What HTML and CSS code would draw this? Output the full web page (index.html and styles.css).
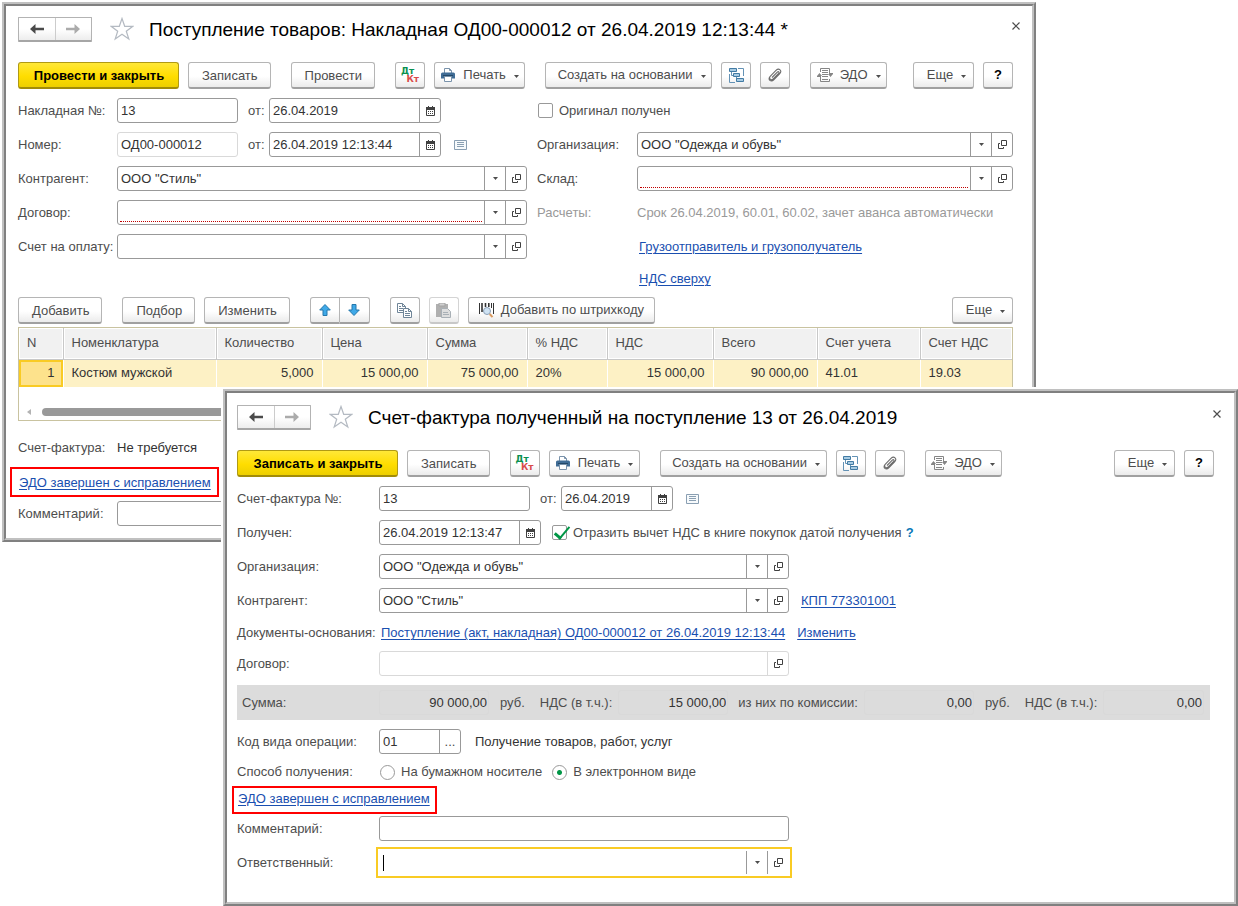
FILE: index.html
```html
<!DOCTYPE html>
<html lang="ru">
<head>
<meta charset="utf-8">
<title>Поступление товаров</title>
<link rel="stylesheet" href="styles.css">
</head>
<body>
<svg class="sprite" aria-hidden="true">
  <symbol id="i-back" viewBox="0 0 14 12"><path d="M0 6 5.500 1v3.700H14v2.600H5.500V11z" fill="currentColor"/></symbol>
  <symbol id="i-fwd" viewBox="0 0 14 12"><path d="M14 6 8.500 1v3.700H0v2.600h8.500V11z" fill="currentColor"/></symbol>
  <symbol id="i-star" viewBox="0 0 24 24"><path d="M12 1.500 14.700 9.300H22.800L16.300 14.200 18.800 22 12 17.200 5.200 22 7.700 14.200 1.200 9.300H9.300z" fill="none" stroke="#b4bac2" stroke-width="1.200"/></symbol>
  <symbol id="i-close" viewBox="0 0 10 10"><path d="M1.500 1.500l7 7M8.500 1.500l-7 7" stroke="#4d4d4d" stroke-width="1.200" fill="none"/></symbol>
  <symbol id="i-print" viewBox="0 0 14 14"><path d="M3.500 5V.5h5l2 2V5" fill="#fff" stroke="#7a93ab"/><path d="M8.500.5v2h2" fill="none" stroke="#7a93ab"/><path d="M1.500 4.500h11a1.500 1.500 0 0 1 1.500 1.500v4.500H0V6a1.500 1.500 0 0 1 1.500-1.500z" fill="#3f6c95"/><path d="M2 7.500h10" stroke="#234867"/><path d="M3.500 8.500h7v5h-7z" fill="#fff" stroke="#7a93ab"/></symbol>
  <symbol id="i-tree" viewBox="0 0 15 15"><path d="M9 .5h5.500V8M.5 6v8.500H6M2.500 3.500v4h2M7.500 8.500v4h1" fill="none" stroke="#6492b5"/><path d="M.5.5h7v3h-7zM4.500 5.500h6v3h-6zM7.500 10.500h7v3h-7z" fill="#a8cbe2" stroke="#427ba4"/></symbol>
  <symbol id="i-clip" viewBox="0 0 14 14"><path d="M4 9.500 9.300 4.200c1.200-1.200 2.400 0 1.300 1.200L5.200 10.800C3 13 .2 10.300 2.400 8.100L8 2.400c3-3 6.500.4 3.600 3.500L6 11.600c-3 3-6.700 0-4-3" fill="none" stroke="#6c6c6c" stroke-width="1.100"/></symbol>
  <symbol id="i-edo" viewBox="0 0 16 14"><path d="M3.500 4V.5h9V5M3.500 9v4.500h9V11" fill="none" stroke="#858585"/><path d="M5 2.500h6M5 4.500h6M5 6.500h6M5 8.500h6M5 11.500h6M0 8.500h4M12 5.500h4" stroke="#858585"/><path d="M0 8h5L2.500 5zM11 6h5l-2.500 3z" fill="#858585"/></symbol>
  <symbol id="i-caret" viewBox="0 0 5 3"><path d="M0 0h5L2.500 3z" fill="#4d4d4d"/></symbol>
  <symbol id="i-cal" viewBox="0 0 9 10"><path d="M2.500 0v2M6.500 0v2" stroke="#404040"/><path d="M0 1h9v3H0z" fill="#404040"/><path d="M.5 3.500v6h8v-6" fill="none" stroke="#404040"/><path d="M2 5.500h1M4 5.500h1M6 5.500h1M2 7.500h1M4 7.500h1M6 7.500h1" stroke="#404040"/></symbol>
  <symbol id="i-open" viewBox="0 0 9 9"><path d="M3.500.5h5v5h-5z" fill="none" stroke="#404040"/><path d="M2 3.500H.5v5h5V7" fill="none" stroke="#404040"/></symbol>
  <symbol id="i-list" viewBox="0 0 13 10"><path d="M.5.5h12v9H.5z" fill="#f7fafc" stroke="#8a9fb2"/><path d="M3 2.500h7M3 4.500h7M3 6.500h7" stroke="#8a9fb2"/></symbol>
  <symbol id="i-up" viewBox="0 0 12 12"><path d="M6 .5 11.300 6H8v5.500H4V6H.7z" fill="#3fa9e8" stroke="#2577ab"/></symbol>
  <symbol id="i-down" viewBox="0 0 12 12"><path d="M6 11.500 11.300 6H8V.5H4V6H.7z" fill="#3fa9e8" stroke="#2577ab"/></symbol>
  <symbol id="i-copy" viewBox="0 0 15 15"><path d="M.5.5h5l3 3v6h-8z" fill="#fff" stroke="#6f8598"/><path d="M5.500.5v3h3M2 3.500h2M2 5.500h4M2 7.500h4" fill="none" stroke="#6f8598"/><path d="M6.500 5.500h5l3 3v6h-8z" fill="#fff" stroke="#6f8598"/><path d="M11.500 5.500v3h3M8 8.500h2M8 10.500h5M8 12.500h5" fill="none" stroke="#6f8598"/></symbol>
  <symbol id="i-paste" viewBox="0 0 15 15"><path d="M0 1h12v13H0z" fill="#b0b0b0"/><path d="M3 0h6v3H3z" fill="#d0d0d0" stroke="#a4a4a4"/><path d="M5.500 5.500h6l3 3v6h-9z" fill="#dedede" stroke="#a9b0b6"/><path d="M7 9.500h5M7 11.500h6" stroke="#a9b0b6"/></symbol>
  <symbol id="i-bar" viewBox="0 0 15 15"><path d="M.5 0v11M12.500 0v5M14.500 0v11" stroke="#333"/><path d="M3 0v9M6.500 0v4M9.800 0v4" stroke="#333" stroke-width="1.600"/><circle cx="8" cy="8" r="3.500" fill="#cfe3f4" stroke="#8b9fb5"/><path d="M10.700 11 13.500 14.200" stroke="#d99a60" stroke-width="2"/></symbol>
</svg>

<main class="desktop">
<section class="window window-receipt">
 <div class="window-body">
  <header class="titlebar">
    <div class="nav"><button aria-label="Назад"><svg class="ic-nav"><use href="#i-back"/></svg></button><button class="muted" aria-label="Вперед"><svg class="ic-nav"><use href="#i-fwd"/></svg></button></div>
    <svg class="star"><use href="#i-star"/></svg>
    <h1>Поступление товаров: Накладная ОД00-000012 от 26.04.2019 12:13:44 *</h1>
    <button class="close" aria-label="Закрыть"><svg class="ic-close"><use href="#i-close"/></svg></button>
  </header>
  <div class="toolbar">
    <button class="btn primary">Провести и закрыть</button>
    <button class="btn">Записать</button>
    <button class="btn apart">Провести</button>
    <button class="btn square apart dtkt"><span class="dt">Дт</span><span class="kt">Кт</span></button>
    <button class="btn print"><svg class="ic14"><use href="#i-print"/></svg>Печать<svg class="caret"><use href="#i-caret"/></svg></button>
    <button class="btn create apart">Создать на основании<svg class="caret"><use href="#i-caret"/></svg></button>
    <button class="btn square" aria-label="Структура"><svg class="ic15"><use href="#i-tree"/></svg></button>
    <button class="btn square" aria-label="Файлы"><svg class="ic14"><use href="#i-clip"/></svg></button>
    <button class="btn edo apart"><svg class="ic16"><use href="#i-edo"/></svg>ЭДО<svg class="caret"><use href="#i-caret"/></svg></button>
    <button class="btn more push">Еще<svg class="caret"><use href="#i-caret"/></svg></button>
    <button class="btn square help">?</button>
  </div>
  <div class="columns">
    <div class="rows">
      <div class="row"><label class="lbl" for="a1">Накладная №:</label><div class="field w-num"><input id="a1" value="13"></div><label class="ot" for="a2">от:</label><div class="field w-date"><input id="a2" value="26.04.2019"><button aria-label="Календарь"><svg class="ic-cal"><use href="#i-cal"/></svg></button></div></div>
      <div class="row"><label class="lbl" for="a3">Номер:</label><div class="field w-num light"><input id="a3" value="ОД00-000012"></div><label class="ot" for="a4">от:</label><div class="field w-date"><input id="a4" value="26.04.2019 12:13:44"><button aria-label="Календарь"><svg class="ic-cal"><use href="#i-cal"/></svg></button></div><svg class="ic-list"><use href="#i-list"/></svg></div>
      <div class="row"><label class="lbl" for="a5">Контрагент:</label><div class="field grow"><input id="a5" value='ООО "Стиль"'><button aria-label="Выбрать"><svg class="caret"><use href="#i-caret"/></svg></button><button aria-label="Открыть"><svg class="ic-open"><use href="#i-open"/></svg></button></div></div>
      <div class="row"><label class="lbl" for="a6">Договор:</label><div class="field grow required"><input id="a6"><button aria-label="Выбрать"><svg class="caret"><use href="#i-caret"/></svg></button><button aria-label="Открыть"><svg class="ic-open"><use href="#i-open"/></svg></button></div></div>
      <div class="row"><label class="lbl" for="a7">Счет на оплату:</label><div class="field grow"><input id="a7"><button aria-label="Выбрать"><svg class="caret"><use href="#i-caret"/></svg></button><button aria-label="Открыть"><svg class="ic-open"><use href="#i-open"/></svg></button></div></div>
    </div>
    <div class="rows">
      <div class="row"><label class="check"><input type="checkbox">Оригинал получен</label></div>
      <div class="row"><label class="lbl" for="a8">Организация:</label><div class="field grow"><input id="a8" value='ООО "Одежда и обувь"'><button aria-label="Выбрать"><svg class="caret"><use href="#i-caret"/></svg></button><button aria-label="Открыть"><svg class="ic-open"><use href="#i-open"/></svg></button></div></div>
      <div class="row"><label class="lbl" for="a9">Склад:</label><div class="field grow required"><input id="a9"><button aria-label="Выбрать"><svg class="caret"><use href="#i-caret"/></svg></button><button aria-label="Открыть"><svg class="ic-open"><use href="#i-open"/></svg></button></div></div>
      <div class="row dim"><span class="lbl">Расчеты:</span><span>Срок 26.04.2019, 60.01, 60.02, зачет аванса автоматически</span></div>
      <div class="row links"><a href="#">Грузоотправитель и грузополучатель</a><a href="#">НДС сверху</a></div>
    </div>
  </div>
  <div class="toolbar items-bar">
    <button class="btn">Добавить</button>
    <button class="btn apart">Подбор</button>
    <button class="btn">Изменить</button>
    <div class="pair apart"><button class="btn" aria-label="Вверх"><svg class="ic12"><use href="#i-up"/></svg></button><button class="btn" aria-label="Вниз"><svg class="ic12"><use href="#i-down"/></svg></button></div>
    <button class="btn square apart" aria-label="Копировать"><svg class="ic15"><use href="#i-copy"/></svg></button>
    <button class="btn square disabled" aria-label="Вставить"><svg class="ic15"><use href="#i-paste"/></svg></button>
    <button class="btn barcode"><svg class="ic15"><use href="#i-bar"/></svg>Добавить по штрихкоду</button>
    <button class="btn more push">Еще<svg class="caret"><use href="#i-caret"/></svg></button>
  </div>
  <div class="grid-box">
    <table class="items">
      <colgroup><col class="c45"><col class="c153"><col class="c106"><col class="c105"><col class="c100"><col class="c80"><col class="c106"><col class="c104"><col class="c103"><col></colgroup>
      <thead><tr><th>N</th><th>Номенклатура</th><th>Количество</th><th>Цена</th><th>Сумма</th><th>% НДС</th><th>НДС</th><th>Всего</th><th>Счет учета</th><th>Счет НДС</th></tr></thead>
      <tbody><tr><td class="num current">1</td><td>Костюм мужской</td><td class="num">5,000</td><td class="num">15 000,00</td><td class="num">75 000,00</td><td>20%</td><td class="num">15 000,00</td><td class="num">90 000,00</td><td>41.01</td><td>19.03</td></tr></tbody>
    </table>
    <div class="scroll"><span class="scroll-arrow"></span><span class="scroll-thumb"></span></div>
  </div>
  <div class="footer-rows">
    <div class="line"><span class="lbl">Счет-фактура:</span><span class="value">Не требуется</span></div>
    <div class="marked"><a href="#">ЭДО завершен с исправлением</a></div>
    <div class="row"><label class="lbl" for="a10">Комментарий:</label><div class="field grow"><input id="a10"></div></div>
  </div>
 </div>
</section>

<section class="window window-invoice">
 <div class="window-body">
  <header class="titlebar">
    <div class="nav"><button aria-label="Назад"><svg class="ic-nav"><use href="#i-back"/></svg></button><button class="muted" aria-label="Вперед"><svg class="ic-nav"><use href="#i-fwd"/></svg></button></div>
    <svg class="star"><use href="#i-star"/></svg>
    <h1>Счет-фактура полученный на поступление 13 от 26.04.2019</h1>
    <button class="close" aria-label="Закрыть"><svg class="ic-close"><use href="#i-close"/></svg></button>
  </header>
  <div class="toolbar">
    <button class="btn primary">Записать и закрыть</button>
    <button class="btn">Записать</button>
    <button class="btn square apart dtkt"><span class="dt">Дт</span><span class="kt">Кт</span></button>
    <button class="btn print"><svg class="ic14"><use href="#i-print"/></svg>Печать<svg class="caret"><use href="#i-caret"/></svg></button>
    <button class="btn create apart">Создать на основании<svg class="caret"><use href="#i-caret"/></svg></button>
    <button class="btn square" aria-label="Структура"><svg class="ic15"><use href="#i-tree"/></svg></button>
    <button class="btn square" aria-label="Файлы"><svg class="ic14"><use href="#i-clip"/></svg></button>
    <button class="btn edo apart"><svg class="ic16"><use href="#i-edo"/></svg>ЭДО<svg class="caret"><use href="#i-caret"/></svg></button>
    <button class="btn more push">Еще<svg class="caret"><use href="#i-caret"/></svg></button>
    <button class="btn square help">?</button>
  </div>
  <div class="rows">
    <div class="row"><label class="lbl" for="b1">Счет-фактура №:</label><div class="field w-inv"><input id="b1" value="13"></div><label class="ot" for="b2">от:</label><div class="field w-short"><input id="b2" value="26.04.2019"><button aria-label="Календарь"><svg class="ic-cal"><use href="#i-cal"/></svg></button></div><svg class="ic-list"><use href="#i-list"/></svg></div>
    <div class="row"><label class="lbl" for="b3">Получен:</label><div class="field w-stamp"><input id="b3" value="26.04.2019 12:13:47"><button aria-label="Календарь"><svg class="ic-cal"><use href="#i-cal"/></svg></button></div><label class="check inset"><input type="checkbox" checked>Отразить вычет НДС в книге покупок датой получения</label><button class="hint">?</button></div>
    <div class="row"><label class="lbl" for="b4">Организация:</label><div class="field w-main"><input id="b4" value='ООО "Одежда и обувь"'><button aria-label="Выбрать"><svg class="caret"><use href="#i-caret"/></svg></button><button aria-label="Открыть"><svg class="ic-open"><use href="#i-open"/></svg></button></div></div>
    <div class="row"><label class="lbl" for="b5">Контрагент:</label><div class="field w-main"><input id="b5" value='ООО "Стиль"'><button aria-label="Выбрать"><svg class="caret"><use href="#i-caret"/></svg></button><button aria-label="Открыть"><svg class="ic-open"><use href="#i-open"/></svg></button></div><a class="side" href="#">КПП 773301001</a></div>
  </div>
  <div class="line basis"><span class="lbl">Документы-основания:</span><a href="#">Поступление (акт, накладная) ОД00-000012 от 26.04.2019 12:13:44</a><a class="side" href="#">Изменить</a></div>
  <div class="row"><label class="lbl" for="b6">Договор:</label><div class="field w-main light"><input id="b6"><button aria-label="Открыть"><svg class="ic-open"><use href="#i-open"/></svg></button></div></div>
  <div class="totals">
    <label class="lbl" for="t1">Сумма:</label><input id="t1" value="90 000,00" readonly><span class="unit">руб.</span>
    <label for="t2">НДС (в т.ч.):</label><input id="t2" value="15 000,00" readonly>
    <label class="gap" for="t3">из них по комиссии:</label><input id="t3" value="0,00" readonly><span class="unit">руб.</span>
    <label for="t4">НДС (в т.ч.):</label><input id="t4" class="last" value="0,00" readonly>
  </div>
  <div class="row"><label class="lbl" for="b7">Код вида операции:</label><div class="field w-code"><input id="b7" value="01"><button>...</button></div><span class="value note">Получение товаров, работ, услуг</span></div>
  <div class="line way"><span class="lbl">Способ получения:</span><label class="radio"><input type="radio" name="way">На бумажном носителе</label><label class="radio"><input type="radio" name="way" checked>В электронном виде</label></div>
  <div class="marked"><a href="#">ЭДО завершен с исправлением</a></div>
  <div class="rows">
    <div class="row"><label class="lbl" for="b8">Комментарий:</label><div class="field w-main"><input id="b8"></div></div>
    <div class="row"><label class="lbl" for="b9">Ответственный:</label><div class="field w-main focused"><span class="cursor"></span><input id="b9"><button aria-label="Выбрать"><svg class="caret"><use href="#i-caret"/></svg></button><button aria-label="Открыть"><svg class="ic-open"><use href="#i-open"/></svg></button></div></div>
  </div>
 </div>
</section>
</main>
</body>
</html>
```

FILE: styles.css
```css
* { box-sizing: border-box; }

body {
  margin: 0;
  background: #fff;
  color: #4d4d4d;
  font: 13px/16px "Liberation Sans", Arial, sans-serif;
}

button, input { font: inherit; color: inherit; margin: 0; }
button { cursor: pointer; }
svg { display: block; flex: none; }
a { color: #1a4fb0; text-decoration: underline; text-underline-offset: 2px; text-decoration-thickness: 1px; white-space: nowrap; }

.sprite { position: absolute; width: 0; height: 0; }
.desktop { position: relative; min-height: 906px; overflow: hidden; }

/* Windows */
.window {
  position: absolute;
  background: #fff;
  border: 2px solid;
  border-color: #c0c0c0 #808080 #808080 #c0c0c0;
}
.window-body {
  border: 2px solid;
  border-color: #808080 #c0c0c0 #c0c0c0 #808080;
}
.window-receipt { left: 2px; right: 202px; top: 2px; }
.window-receipt .window-body { padding: 10px 19px 12px 12px; }
.window-invoice { left: 223px; right: 0; top: 389px; box-shadow: 0 0 0 2px #fff; }
.window-invoice .window-body { padding: 11px 20px 27px 10px; }

/* Title */
.titlebar { display: flex; align-items: center; height: 26px; margin-bottom: 20px; }
.nav { display: flex; width: 74px; height: 25px; border: 1px solid #b3b3b3; border-bottom: 2px solid #a6a6a6; border-radius: 1px; background: linear-gradient(#fff 50%, #ededed); }
.nav button { flex: 1; display: flex; align-items: center; justify-content: center; padding: 0; border: 0; background: none; color: #4a4a4a; }
.nav .muted { color: #ababab; border-left: 1px solid #ccc; }
.ic-nav { width: 14px; height: 12px; }
.star { width: 24px; height: 24px; margin: 0 15px 0 18px; }
h1 { margin: 0; padding-top: 2px; color: #000; font-size: 19px; line-height: 24px; font-weight: 400; white-space: nowrap; }
.close { margin: 0 -8px 6px auto; padding: 0; border: 0; background: none; }
.ic-close { width: 10px; height: 10px; }

/* Toolbars */
.toolbar { display: flex; gap: 9px; margin-bottom: 9px; }
.btn {
  display: flex; align-items: center; justify-content: center;
  height: 27px; padding: 1px 12px 0 13px;
  border: 1px solid #b5b5b5; border-bottom: 2px solid #a0a0a0; border-radius: 3px;
  background: linear-gradient(#fff 55%, #ebebeb);
  white-space: nowrap;
}
.primary { min-width: 161px; border-color: #b09a14; border-bottom-color: #a28c08; background: linear-gradient(#ffe838, #ffdd00 55%, #edcf00); color: #000; font-weight: 700; }
.apart { margin-left: 11px; }
.push { margin-left: auto; }
.square { width: 30px; padding: 0; }
.print { width: 91px; padding: 0 6px 0 7px; }
.print .ic14 { margin-right: 8px; }
.create { width: 167px; padding: 0 6px 0 12px; }
.edo { width: 77px; padding: 0 6px; }
.edo .ic16 { margin-right: 7px; }
.more { width: 61px; padding: 0 6px 0 12px; }
.btn .caret { margin: 2px 0 0 8px; }
.caret { width: 5px; height: 3px; }
.help { color: #000; font-weight: 700; }
.dtkt { position: relative; font: 700 9px/9px "DejaVu Sans", sans-serif; }
.dt { position: absolute; left: 5px; top: 4px; color: #0a9150; }
.kt { position: absolute; right: 5px; top: 12px; color: #d94b4b; }
.ic12 { width: 12px; height: 12px; }
.ic14 { width: 14px; height: 14px; }
.ic15 { width: 15px; height: 15px; }
.ic16 { width: 16px; height: 14px; }
.pair { display: flex; }
.pair .btn { width: 30px; padding: 0; }
.pair .btn:first-child { border-radius: 3px 0 0 3px; }
.pair .btn:last-child { border-left: 0; border-radius: 0 3px 3px 0; }
.disabled { border-color: #d4d4d4; border-bottom-color: #c8c8c8; }
.barcode { width: 187px; padding: 0 6px; }
.barcode .ic15 { margin-right: 7px; }

/* Form rows */
.columns { display: grid; grid-template-columns: 509fr 476fr; gap: 10px; }
.rows { display: flex; flex-direction: column; gap: 9px; min-width: 0; }
.row { display: flex; align-items: center; height: 25px; }
.lbl { flex: none; width: 99px; white-space: nowrap; }
.rows + .rows .lbl { width: 100px; }
.window-invoice .lbl, .window-invoice .rows + .rows .lbl { width: 142px; }
.value { color: #333; }
.dim { color: #999; white-space: nowrap; }
.ot { width: 31px; padding-left: 10px; }
.field { display: flex; align-items: stretch; flex: none; height: 25px; border: 1px solid #999; border-radius: 3px; background: #fff; }
.field input { flex: 1; min-width: 0; width: 0; padding: 0 3px; border: 0; outline: 0; background: none; color: #333; }
.field button { flex: none; display: flex; align-items: center; justify-content: center; width: 21px; padding: 0; border: 0; border-left: 1px solid #999; background: none; }
.grow { flex: 1; }
.light { border-color: #d9d9d9; }
.light button { border-color: #d9d9d9; }
.field.required input { margin: 0 2px 2px; padding: 0 1px; border-bottom: 1px dotted #c00000; }
.w-num { width: 121px; }
.w-date { width: 172px; }
.w-inv { width: 151px; }
.w-short { width: 112px; }
.w-stamp { width: 162px; }
.w-main { width: 410px; }
.w-code { width: 82px; }
.ic-cal { width: 9px; height: 10px; }
.ic-open { width: 9px; height: 9px; }
.ic-list { width: 13px; height: 10px; margin-left: 13px; }
.links { flex-direction: column; align-items: flex-start; gap: 16px; height: auto; padding: 5px 0 2px 102px; }

.check, .radio { display: flex; align-items: center; white-space: nowrap; }
.check input, .radio input { appearance: none; width: 15px; height: 15px; margin: 0 6px 0 1px; border: 1px solid #999; border-radius: 2px; background: #fff; }
.check input:checked { position: relative; }
.check input:checked::after { content: ""; position: absolute; left: 5px; top: -3px; width: 6px; height: 13px; border: solid #009646; border-width: 0 2px 3px 0; transform: rotate(40deg); }
.check.inset { margin-left: 10px; }
.radio input { margin-left: 1px; border-radius: 50%; }
.radio input:checked { background: radial-gradient(circle, #009646 2px, #fff 3px); }
.hint { margin-left: 4px; padding: 0; border: 0; background: none; color: #0a78b8; font-weight: 700; }

/* Goods table */
.items-bar { margin: 8px 0 3px; }
.grid-box { border: 1px solid #c9c3a0; height: 94px; }
.items { width: 100%; border-collapse: collapse; table-layout: fixed; }
.items th, .items td { padding: 0 8px; text-align: left; font-weight: 400; white-space: nowrap; }
.items th { height: 31px; background: #f1f1f1; border-right: 1px solid #c8c8c8; border-bottom: 1px solid #c8c8c8; box-shadow: inset 0 0 0 1px #fff; }
.items td { height: 28px; background: #fdf1c5; border-right: 1px solid #fff; color: #333; }
.items th:last-child, .items td:last-child { border-right: 0; }
.items .num { text-align: right; }
.items .current { background: #fde28c; box-shadow: inset 0 0 0 2px #f9cb24; }
.c45 { width: 44px; }
.c80 { width: 80px; }
.c100 { width: 100px; }
.c103 { width: 103px; }
.c104 { width: 104px; }
.c105 { width: 105px; }
.c106 { width: 106px; }
.c153 { width: 153px; }
.scroll { display: flex; align-items: center; height: 8px; margin: 21px 8px 0; }
.scroll-arrow { border: 3px solid transparent; border-left: 0; border-right: 4px solid #b3b3b3; }
.scroll-thumb { flex: 1; height: 8px; margin-left: 11px; border-radius: 4px; background: #999; }

/* Lower rows */
.line { display: flex; align-items: center; height: 16px; white-space: nowrap; }
.footer-rows { padding-top: 19px; }
.marked { display: flex; width: max-content; margin-left: -8px; padding: 6px 6px 4px 7px; border: 2px solid #f00; line-height: 16px; }
.footer-rows .marked { margin-top: 11px; margin-bottom: 4px; }
.basis { margin: 12px 0 10px; }
.basis a { margin-left: 2px; }
a.side { margin-left: 12px; }
.basis a.side { margin-left: 12px; }
.totals { display: flex; align-items: center; height: 35px; margin: 9px 4px 9px 0; padding: 0 6px 0 5px; background: #dcdcdc; white-space: nowrap; }
.window-invoice .totals .lbl { width: 137px; }
.totals input { width: 110px; height: 25px; padding: 0 1px; border: 1px solid #d9d9d9; border-radius: 3px; background: none; color: #333; text-align: right; }
.totals label + input { margin-left: 6px; }
.totals .lbl + input { margin-left: 0; }
.totals .last { flex: 1; min-width: 0; }
.unit { margin: 0 15px 0 11px; }
.gap { margin-left: 10px; }
.note { margin-left: 14px; }
.way { margin: 10px 0 6px; }
.radio + .radio { margin-left: 9px; }
.window-invoice .marked { margin-left: -5px; margin-bottom: 2px; padding: 3px 5px 5px 4px; }
.focused { position: relative; border-color: transparent; border-radius: 0; outline: 2px solid #f9cb24; outline-offset: 1px; }
.cursor { position: absolute; left: 3px; top: 4px; width: 1px; height: 16px; background: #000; }
```
